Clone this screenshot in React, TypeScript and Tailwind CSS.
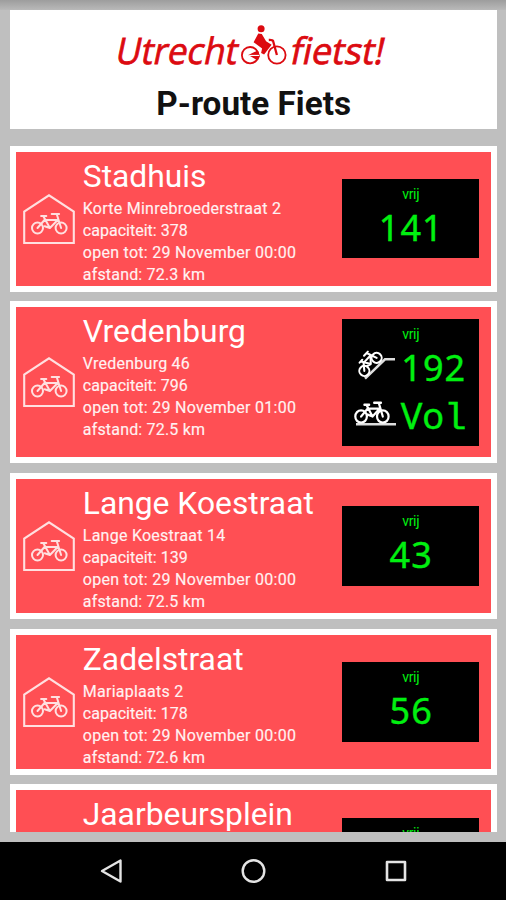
type Location = {
  name: string;
  address: string;
  capacity: string;
  openUntil: string;
  distance: string;
  rows: { icon?: "slope" | "flat"; value: string }[];
  card: string;
  addressTracking: string;
};

const locations: Location[] = [
  { name: "Stadhuis", address: "Korte Minrebroederstraat 2", capacity: "378", openUntil: "29 November 00:00", distance: "72.3", rows: [{ value: "141" }], card: "h-[146px]", addressTracking: "tracking-[0.25px]" },
  { name: "Vredenburg", address: "Vredenburg 46", capacity: "796", openUntil: "29 November 01:00", distance: "72.5", rows: [{ icon: "slope", value: "192" }, { icon: "flat", value: "Vol" }], card: "h-[162px]", addressTracking: "tracking-[0.25px]" },
  { name: "Lange Koestraat", address: "Lange Koestraat 14", capacity: "139", openUntil: "29 November 00:00", distance: "72.5", rows: [{ value: "43" }], card: "h-[146px]", addressTracking: "tracking-[0.25px]" },
  { name: "Zadelstraat", address: "Mariaplaats 2", capacity: "178", openUntil: "29 November 00:00", distance: "72.6", rows: [{ value: "56" }], card: "h-[146px]", addressTracking: "tracking-[0.25px]" },
  { name: "Jaarbeursplein", address: "", capacity: "", openUntil: "", distance: "", rows: [{ value: "" }], card: "h-[146px]", addressTracking: "tracking-normal" },
];

function BikeShape({ r }: { r: number }) {
  return (
    <g fill="none" stroke="currentColor" strokeLinecap="round" strokeLinejoin="round">
      <circle cx="6.4" cy="15.2" r={r} />
      <circle cx="30" cy="15.2" r={r} />
      <path d="M6.4 15.2 L13.4 7.2 H26.6 L18.8 15.2 L12.4 3.6 M10 3.2 H15.2 M18.8 15.2 L13.6 13.4 M30 15.2 L25.6 1.2 H20.6 M25.6 1.2 H28" />
    </g>
  );
}

function HouseIcon() {
  return (
    <svg className="h-[50px] w-[52px] text-[#ffe0e0]" viewBox="0 0 52 50">
      <path d="M1.2 49 V17.5 L26 1.3 L50.8 17.5 V49 Z" fill="none" stroke="currentColor" strokeWidth="2.1" />
      <g transform="translate(8.1 18.8)" strokeWidth="2">
        <BikeShape r={5.5} />
      </g>
    </svg>
  );
}

function SlopeIcon() {
  return (
    <svg className="h-[32px] w-[45px] overflow-visible text-white" viewBox="0 0 45 32">
      <path d="M9 27.6 L29 8.3 H39" fill="none" stroke="#ddd" strokeWidth="2.5" />
      <g transform="translate(-3.4 15.5) rotate(-46.6) scale(.76)" strokeWidth="2.7">
        <BikeShape r={6.6} />
      </g>
    </svg>
  );
}

function FlatIcon() {
  return (
    <svg className="h-[32px] w-[45px] overflow-visible text-white" viewBox="0 0 45 32">
      <path d="M0 25.3 H40" fill="none" stroke="#ddd" strokeWidth="2.6" />
      <g transform="translate(-0.8 2.6) scale(.92 .98)" strokeWidth="2.4">
        <BikeShape r={6.3} />
      </g>
    </svg>
  );
}

function Logo() {
  return (
    <svg className="h-[50px] w-[274px] overflow-visible text-[#dc0a10]" viewBox="116.7 20 274 50" fill="currentColor">
      <g fontFamily="'Open Sans', 'Noto Sans', sans-serif" fontSize="36.5" stroke="currentColor" strokeWidth="0.75">
        <text transform="translate(113.7 64) skewX(-12)" textLength="122" lengthAdjust="spacingAndGlyphs">Utrecht</text>
        <text transform="translate(288.5 64) skewX(-12)" textLength="93.5" lengthAdjust="spacingAndGlyphs">fietst!</text>
      </g>
      <circle cx="260.8" cy="28.8" r="3.5" />
      <path d="M258 33.5 L253.3 42.3 L261.8 48.6 L260.8 53 L263.8 54.5 L271.3 44.8 L265.8 41.2 L261.5 34 Z" />
      <g fill="none" stroke="currentColor" strokeWidth="1.8">
        <circle cx="249.8" cy="55.2" r="8.2" />
        <circle cx="276.6" cy="55" r="8.7" />
        <path d="M276.6 55 L272.8 41 Q272.3 39.8 268.5 40" strokeWidth="2.3" />
      </g>
      <path d="M248 55 L257.5 50.5 L259.8 56 L257.5 60.5 Z" />
      <path d="M248.8 54.9 H259 V56 H248.8 Z" fill="white" />
    </svg>
  );
}

function Digits({ value }: { value: string }) {
  return (
    <div className="flex h-[48px] font-['Noto_Sans',sans-serif] text-[36px] leading-[49px] [-webkit-text-stroke:0.4px_#00f010]">
      {value.split("").map((char, i) => (
        <span key={i} className={char === "l" ? "w-[21.7px] text-center font-['Liberation_Mono',monospace] text-[37.5px] leading-[57px]" : "w-[21.7px] text-center"}>
          {char}
        </span>
      ))}
    </div>
  );
}

function Card({ item }: { item: Location }) {
  return (
    <section className={`flex shrink-0 items-center border-[6.4px] border-white bg-[#ff4f54] pr-[12px] pl-[7px] ${item.card}`}>
      <HouseIcon />
      <div className="ml-[7.4px] flex-1 self-start pt-[3px] whitespace-nowrap text-[#fff2f2]">
        <h2 className="text-[31.8px] leading-[43px] text-white">{item.name}</h2>
        {item.address && (
          <div className="text-[16px] leading-[22px] [-webkit-text-stroke:0.15px_#fff2f2]">
            <p className={item.addressTracking}>{item.address}</p>
            <p className="tracking-[0.02px]">capaciteit: {item.capacity}</p>
            <p className="tracking-[0.28px]">open tot: {item.openUntil}</p>
            <p className="tracking-[0.18px]">afstand: {item.distance} km</p>
          </div>
        )}
      </div>
      <div className="flex w-[137px] shrink-0 flex-col items-center bg-black pt-[6px] pb-[7.5px] text-[#00f010]">
        <span className="text-[14px] leading-[18px] tracking-[-0.3px]">vrij</span>
        {item.rows.map((row) => (
          <div key={row.value} className="flex items-center">
            {row.icon === "slope" && <SlopeIcon />}
            {row.icon === "flat" && <FlatIcon />}
            <Digits value={row.value} />
          </div>
        ))}
      </div>
    </section>
  );
}

export default function App() {
  return (
    <div className="flex h-[900px] w-[506px] flex-col overflow-hidden bg-[#bfbfbf] font-[Roboto,sans-serif]">
      <div className="h-[10px] shrink-0 bg-linear-to-b from-[#9d9d9d] to-[#b9b9b9]" />
      <header className="mr-[9px] ml-[10.4px] flex h-[119px] shrink-0 flex-col items-center bg-white pt-[10px]">
        <Logo />
        <h1 className="mt-[13.5px] text-[33.3px] leading-[40px] font-bold text-[#111]">P-route Fiets</h1>
      </header>
      <main className="mt-[16.7px] mr-[8.8px] ml-[10.4px] flex h-[686px] shrink-0 flex-col gap-[9.7px] overflow-hidden">
        {locations.map((item) => (
          <Card key={item.name} item={item} />
        ))}
      </main>
      <nav className="mt-auto flex h-[58px] shrink-0 items-center justify-between bg-black pr-[99px] pl-[100px] text-[#e4e4e4]">
        <svg className="h-[26px] w-[23px]" viewBox="0 0 23 26" fill="none" stroke="currentColor" strokeWidth="2.4" strokeLinejoin="round">
          <path d="M20.5 2.5 V23.5 L2 13 Z" />
        </svg>
        <svg className="h-[26px] w-[26px]" viewBox="0 0 26 26" fill="none" stroke="currentColor" strokeWidth="2.4">
          <circle cx="12.5" cy="13" r="10.8" />
        </svg>
        <svg className="h-[26px] w-[22px]" viewBox="0 0 22 26" fill="none" stroke="currentColor" strokeWidth="2.6" strokeLinejoin="round">
          <path d="M2 4 H20 V22 H2 Z" />
        </svg>
      </nav>
    </div>
  );
}
